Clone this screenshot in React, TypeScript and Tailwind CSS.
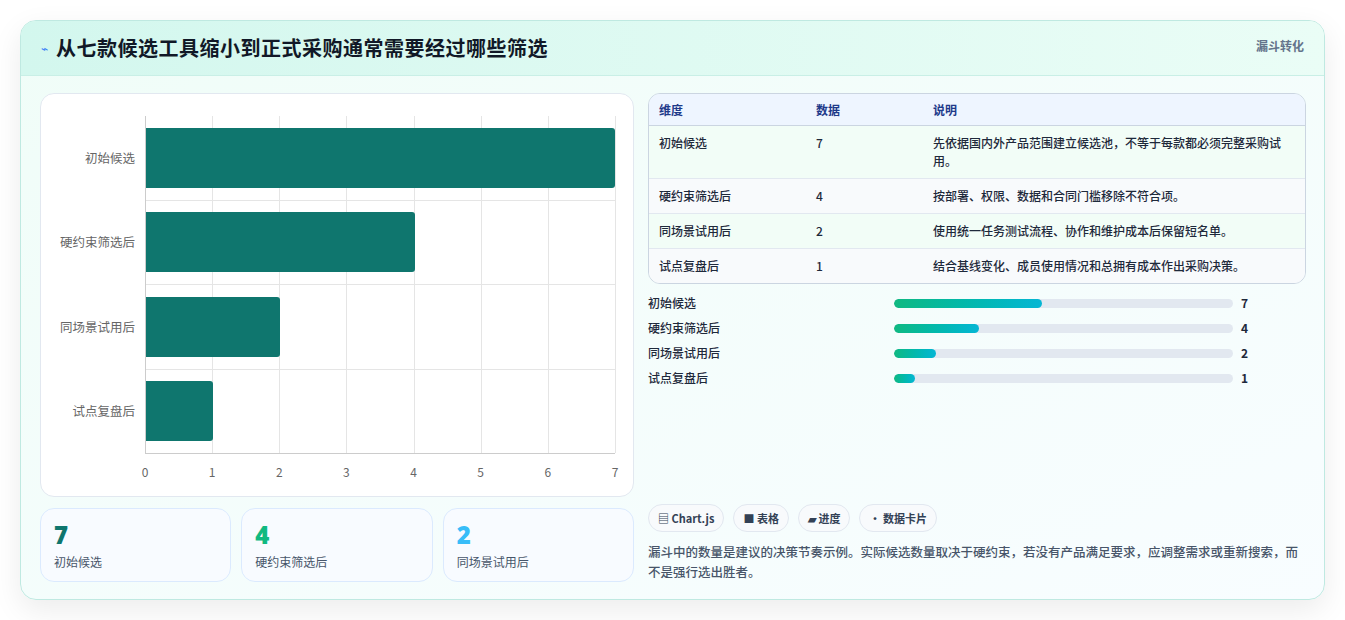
const F = { fontFamily: '"Noto Sans CJK SC","Noto Sans",sans-serif' };
const rows = [
  ["初始候选", 7, "先依据国内外产品范围建立候选池，不等于每款都必须完整采购试用。"],
  ["硬约束筛选后", 4, "按部署、权限、数据和合同门槛移除不符合项。"],
  ["同场景试用后", 2, "使用统一任务测试流程、协作和维护成本后保留短名单。"],
  ["试点复盘后", 1, "结合基线变化、成员使用情况和总拥有成本作出采购决策。"],
] as const;

function Chart() {
  const W = 470;
  return (
    <div className="flex-1 flex">
      <div className="w-[104px] flex flex-col pt-[22px] pb-[42px]">
        {rows.map((r) => (
          <div key={r[0]} className="flex-1 flex items-center justify-end pr-[10px] text-[12.5px] text-[#666]">{r[0]}</div>
        ))}
      </div>
      <div className="w-[470px] flex flex-col pt-[22px]">
        <div className="relative h-[338px] border-l border-b border-[#ccc]">
          {[1,2,3,4,5,6,7].map((i) => (
            <div key={i} className="absolute top-0 bottom-0 border-l border-[#e5e5e5]" style={{ left: (W * i) / 7 - 1 }} />
          ))}
          <div className="absolute inset-0 flex flex-col">
            {rows.map((r, i) => (
              <div key={i} className={`flex-1 flex items-center ${i < 3 ? "border-b border-[#e5e5e5]" : ""}`}>
                <div className="h-[60px] bg-[#0f766e] rounded-r-[3px] relative" style={{ width: (W * r[1]) / 7 }} />
              </div>
            ))}
          </div>
        </div>
        <div className="relative h-[20px]">
          {[0,1,2,3,4,5,6,7].map((i) => (
            <span key={i} className="absolute top-[9px] text-[12px] text-[#666] -translate-x-1/2" style={{ left: (W * i) / 7 }}>{i}</span>
          ))}
        </div>
      </div>
    </div>
  );
}

export default function App() {
  return (
    <div className="w-[1345px] h-[620px] bg-white pt-[20px] px-[20px]" style={F}>
      <div className="h-[580px] rounded-[16px] border border-[#bfe9e1] bg-gradient-to-br from-[#f0fdf8] to-[#f8fdff] shadow-[0_10px_30px_rgba(0,0,0,0.08)] overflow-hidden flex flex-col">
        <div className="h-[55px] shrink-0 bg-gradient-to-r from-[#d3f7ee] to-[#eafdf6] border-b border-[#c9efe6] flex items-center justify-between px-[20px]">
          <div className="flex items-center gap-[8px]">
            <span className="text-[#3b82f6] text-[12px]">⌁</span>
            <span className="text-[20px] font-bold text-[#111827] tracking-[0.5px]">从七款候选工具缩小到正式采购通常需要经过哪些筛选</span>
          </div>
          <span className="text-[12px] font-bold text-[#64748b] self-start mt-[16px]">漏斗转化</span>
        </div>
        <div className="flex-1 flex gap-[14px] pl-[19px] pr-[18px] pt-[17px] pb-[18px]">
          <div className="w-[594px] shrink-0 flex flex-col gap-[11px]">
            <div className="h-[404px] bg-white rounded-[14px] border border-[#e2e8f0] flex">
              <Chart />
            </div>
            <div className="flex gap-[10px]">
              {[["7","#0f766e","初始候选"],["4","#10b981","硬约束筛选后"],["2","#38bdf8","同场景试用后"]].map(([n,c,l]) => (
                <div key={l} className="flex-1 h-[74px] rounded-[14px] border border-[#dbeafe] bg-[#f8fbff] px-[13px] pt-[12px]">
                  <div className="text-[24px] font-extrabold leading-[28px]" style={{ color: c, fontFamily: '"Open Sans",sans-serif' }}>{n}</div>
                  <div className="text-[12px] text-[#475569] mt-[4px]">{l}</div>
                </div>
              ))}
            </div>
          </div>
          <div className="flex-1 flex flex-col justify-between">
            <div>
              <div className="rounded-[12px] border border-[#cbd5e1] overflow-hidden text-[12px] text-[#1e293b] font-medium">
                <div className="flex h-[32px] items-center bg-[#eef5ff] border-b border-[#cbd5e1] font-bold text-[#1e3a8a]">
                  <div className="w-[167px] pl-[10px]">维度</div><div className="w-[117px]">数据</div><div className="flex-1">说明</div>
                </div>
                {rows.map((r, i) => (
                  <div key={i} className={`flex py-[8px] leading-[18px] ${i % 2 ? "bg-[#f8fafc]" : "bg-[#f2fdf7]"} ${i < 3 ? "border-b border-[#e2e8f0]" : ""}`}>
                    <div className="w-[167px] pl-[10px]">{r[0]}</div><div className="w-[117px]">{r[1]}</div><div className="flex-1 pr-[14px]">{r[2]}</div>
                  </div>
                ))}
              </div>
              <div className="flex flex-col gap-[7px] mt-[10px]">
                {rows.map((r) => (
                  <div key={r[0]} className="flex items-center h-[18px] text-[12px] font-medium text-[#1e293b]">
                    <div className="w-[246px]">{r[0]}</div>
                    <div className="w-[339px] h-[9px] rounded-full bg-[#e2e8f0] overflow-hidden">
                      <div className="h-full rounded-full bg-gradient-to-r from-[#10b981] to-[#06b6d4]" style={{ width: `${(r[1] / 16) * 100}%` }} />
                    </div>
                    <div className="ml-[8px] font-bold">{r[1]}</div>
                  </div>
                ))}
              </div>
            </div>
            <div>
              <div className="flex gap-[9px]">
                {["▤ Chart.js","■ 表格","▰ 进度","• 数据卡片"].map((t) => (
                  <span key={t} className="h-[28px] px-[9px] rounded-full border border-[#e2e8f0] bg-[#f8fafc] text-[11px] font-bold text-[#334155] flex items-center">{t}</span>
                ))}
              </div>
              <p className="mt-[10px] text-[12.5px] leading-[20px] text-[#475569] font-medium pr-[8px]">漏斗中的数量是建议的决策节奏示例。实际候选数量取决于硬约束，若没有产品满足要求，应调整需求或重新搜索，而不是强行选出胜者。</p>
            </div>
          </div>
        </div>
      </div>
    </div>
  );
}
